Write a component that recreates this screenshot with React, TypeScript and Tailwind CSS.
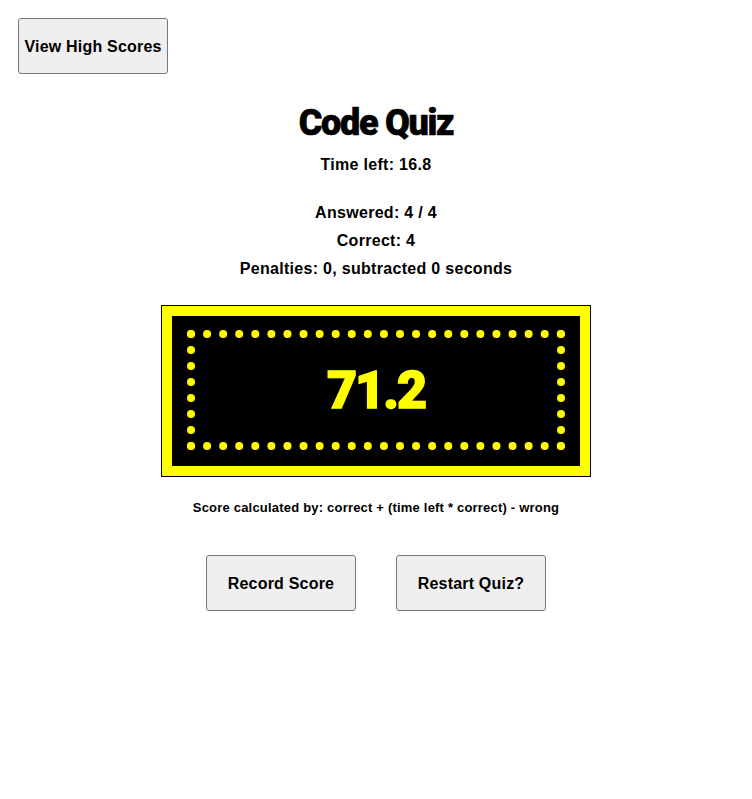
import React from 'react';

const stats = [
  'Answered: 4 / 4',
  'Correct: 4',
  'Penalties: 0, subtracted 0 seconds',
];

function GrayButton({ label }: { label: string }) {
  return (
    <button className="w-[150px] h-[56px] pt-[1px] bg-[#efefef] border border-[#767676] rounded-[3px] text-[16px] font-bold tracking-[0.2px] text-black">
      {label}
    </button>
  );
}

export default function App() {
  return (
    <div className="min-h-screen bg-white text-black font-['Liberation_Sans',Arial,sans-serif]">
      <div className="p-[18px] pb-0">
        <GrayButton label="View High Scores" />
      </div>

      <div className="flex flex-col items-center">
        <h1 className="mt-[29px] text-[36px] leading-[40px] font-black tracking-[-1.3px] font-['Roboto',Arial,sans-serif] [-webkit-text-stroke:0.6px_#000]">
          Code Quiz
        </h1>
        <p className="mt-[8px] text-[16px] leading-[28px] font-bold tracking-[0.3px]">Time left: 16.8</p>

        <div className="mt-[20px] flex flex-col items-center">
          {stats.map((s) => (
            <p key={s} className="text-[16px] leading-[28px] font-bold tracking-[0.3px]">
              {s}
            </p>
          ))}
        </div>

        {/* score marquee */}
        <div className="mt-[22px] w-[430px] h-[172px] border border-black bg-[#ffff00] p-[10px]">
          <div className="w-full h-full bg-black pt-[14px] px-[15px]">
            <div className="h-[120px] border-8 border-dotted border-[#ffff00] flex items-center justify-center">
              <span className="mt-[2px] text-[52px] leading-none font-black tracking-[-2px] text-[#ffff00] font-['Roboto',Arial,sans-serif] [-webkit-text-stroke:1.5px_#ffff00]">
                71.2
              </span>
            </div>
          </div>
        </div>

        <p className="mt-[23px] text-[13px] leading-[16px] font-bold tracking-[0.2px]">
          Score calculated by: correct + (time left * correct) - wrong
        </p>

        <div className="mt-[39px] flex gap-[40px]">
          <GrayButton label="Record Score" />
          <GrayButton label="Restart Quiz?" />
        </div>
      </div>
    </div>
  );
}
